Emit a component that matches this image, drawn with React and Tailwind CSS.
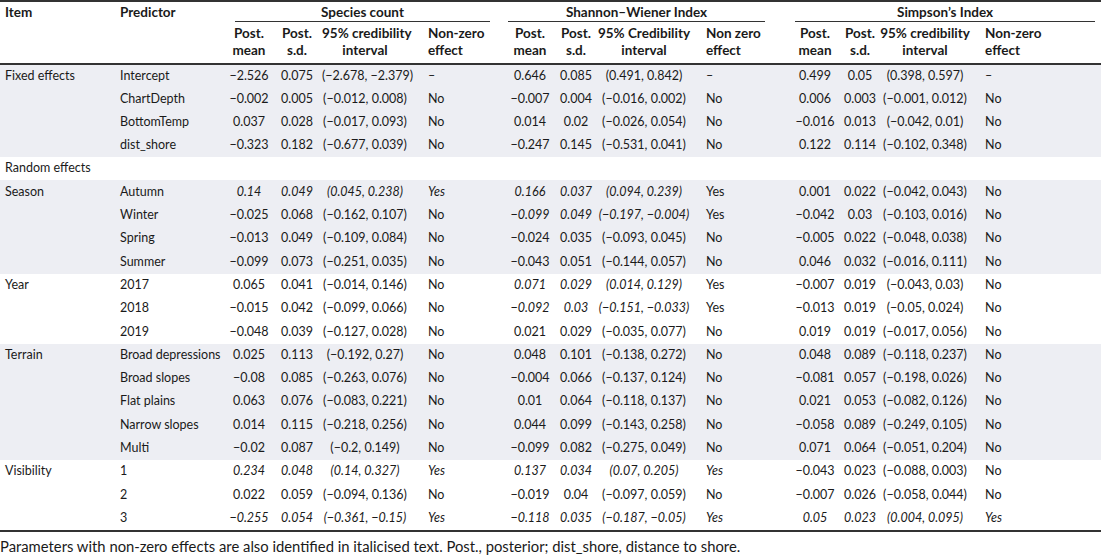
import React from 'react';

// columns: item, predictor, then 3 groups x (mean, sd, CI, non-zero)
const widths = [114, 112, 46, 50, 86, 92, 60, 32, 104, 90, 58, 32, 98, 127];

const valCls = [
  'text-center', 'text-center', 'text-center', 'text-left pl-[20px]',
  'text-center', 'text-center', 'text-center', 'text-left pl-[10px]',
  'text-center', 'text-center', 'text-center', 'text-left pl-[11px]',
];

// a leading "_" marks an italicised value
const groups = [
  {
    item: 'Fixed effects',
    shade: true,
    rows: [
      ['Intercept', '−2.526', '0.075', '(−2.678, −2.379)', '–', '0.646', '0.085', '(0.491, 0.842)', '–', '0.499', '0.05', '(0.398, 0.597)', '–'],
      ['ChartDepth', '−0.002', '0.005', '(−0.012, 0.008)', 'No', '−0.007', '0.004', '(−0.016, 0.002)', 'No', '0.006', '0.003', '(−0.001, 0.012)', 'No'],
      ['BottomTemp', '0.037', '0.028', '(−0.017, 0.093)', 'No', '0.014', '0.02', '(−0.026, 0.054)', 'No', '−0.016', '0.013', '(−0.042, 0.01)', 'No'],
      ['dist_shore', '−0.323', '0.182', '(−0.677, 0.039)', 'No', '−0.247', '0.145', '(−0.531, 0.041)', 'No', '0.122', '0.114', '(−0.102, 0.348)', 'No'],
    ],
  },
  { item: 'Random effects', shade: false, rows: [['']] },
  {
    item: 'Season',
    shade: true,
    rows: [
      ['Autumn', '_0.14', '_0.049', '_(0.045, 0.238)', '_Yes', '_0.166', '_0.037', '_(0.094, 0.239)', 'Yes', '0.001', '0.022', '(−0.042, 0.043)', 'No'],
      ['Winter', '−0.025', '0.068', '(−0.162, 0.107)', 'No', '_−0.099', '_0.049', '_(−0.197, −0.004)', 'Yes', '−0.042', '0.03', '(−0.103, 0.016)', 'No'],
      ['Spring', '−0.013', '0.049', '(−0.109, 0.084)', 'No', '−0.024', '0.035', '(−0.093, 0.045)', 'No', '−0.005', '0.022', '(−0.048, 0.038)', 'No'],
      ['Summer', '−0.099', '0.073', '(−0.251, 0.035)', 'No', '−0.043', '0.051', '(−0.144, 0.057)', 'No', '0.046', '0.032', '(−0.016, 0.111)', 'No'],
    ],
  },
  {
    item: 'Year',
    shade: false,
    rows: [
      ['2017', '0.065', '0.041', '(−0.014, 0.146)', 'No', '_0.071', '_0.029', '_(0.014, 0.129)', 'Yes', '−0.007', '0.019', '(−0.043, 0.03)', 'No'],
      ['2018', '−0.015', '0.042', '(−0.099, 0.066)', 'No', '_−0.092', '_0.03', '_(−0.151, −0.033)', 'Yes', '−0.013', '0.019', '(−0.05, 0.024)', 'No'],
      ['2019', '−0.048', '0.039', '(−0.127, 0.028)', 'No', '0.021', '0.029', '(−0.035, 0.077)', 'No', '0.019', '0.019', '(−0.017, 0.056)', 'No'],
    ],
  },
  {
    item: 'Terrain',
    shade: true,
    rows: [
      ['Broad depressions', '0.025', '0.113', '(−0.192, 0.27)', 'No', '0.048', '0.101', '(−0.138, 0.272)', 'No', '0.048', '0.089', '(−0.118, 0.237)', 'No'],
      ['Broad slopes', '−0.08', '0.085', '(−0.263, 0.076)', 'No', '−0.004', '0.066', '(−0.137, 0.124)', 'No', '−0.081', '0.057', '(−0.198, 0.026)', 'No'],
      ['Flat plains', '0.063', '0.076', '(−0.083, 0.221)', 'No', '0.01', '0.064', '(−0.118, 0.137)', 'No', '0.021', '0.053', '(−0.082, 0.126)', 'No'],
      ['Narrow slopes', '0.014', '0.115', '(−0.218, 0.256)', 'No', '0.044', '0.099', '(−0.143, 0.258)', 'No', '−0.058', '0.089', '(−0.249, 0.105)', 'No'],
      ['Multi', '−0.02', '0.087', '(−0.2, 0.149)', 'No', '−0.099', '0.082', '(−0.275, 0.049)', 'No', '0.071', '0.064', '(−0.051, 0.204)', 'No'],
    ],
  },
  {
    item: 'Visibility',
    shade: false,
    rows: [
      ['1', '_0.234', '_0.048', '_(0.14, 0.327)', '_Yes', '_0.137', '_0.034', '_(0.07, 0.205)', '_Yes', '−0.043', '0.023', '(−0.088, 0.003)', 'No'],
      ['2', '0.022', '0.059', '(−0.094, 0.136)', 'No', '−0.019', '0.04', '(−0.097, 0.059)', 'No', '−0.007', '0.026', '(−0.058, 0.044)', 'No'],
      ['3', '_−0.255', '_0.054', '_(−0.361, −0.15)', '_Yes', '_−0.118', '_0.035', '_(−0.187, −0.05)', '_Yes', '_0.05', '_0.023', '_(0.004, 0.095)', '_Yes'],
    ],
  },
];

function Val({ v, cls }) {
  const italic = v.startsWith('_');
  return (
    <td className={`px-0 whitespace-nowrap ${cls} ${italic ? 'italic' : ''}`}>
      {italic ? v.slice(1) : v}
    </td>
  );
}

function SubHead({ a, b, cls }) {
  return (
    <th className={`px-0 pt-[3px] pb-[4px] font-bold leading-[17px] whitespace-nowrap ${cls}`}>
      {a}
      <br />
      {b}
    </th>
  );
}

function GroupHead({ title, cls }) {
  return (
    <th colSpan={4} className="p-0 font-bold align-top">
      <div className={`border-b border-[#333] h-[20px] leading-[20px] text-center ${cls}`}>{title}</div>
    </th>
  );
}

export default function App() {
  const sub = [
    ['Post.', 'mean'], ['Post.', 's.d.'], ['95% credibility', 'interval'], ['Non-zero', 'effect'],
    ['Post.', 'mean'], ['Post.', 's.d.'], ['95% Credibility', 'interval'], ['Non zero', 'effect'],
    ['Post.', 'mean'], ['Post.', 's.d.'], ['95% credibility', 'interval'], ['Non-zero', 'effect'],
  ];

  return (
    <div className="w-[1101px] h-[556px] bg-white text-[#1a1a1a] font-['Lato',sans-serif] text-[12.5px]">
      <table className="table-fixed border-collapse w-[1101px] border-t-2 border-[#333]">
        <colgroup>
          {widths.map((w, i) => (
            <col key={i} style={{ width: w }} />
          ))}
        </colgroup>
        <thead className="text-[13.5px]">
          <tr className="h-[21px]">
            <th className="pl-[5px] text-left font-bold align-top leading-[20px]">Item</th>
            <th className="pl-[6px] text-left font-bold align-top leading-[20px]">Predictor</th>
            <GroupHead title="Species count" cls="ml-[9px] mr-[10px]" />
            <GroupHead title="Shannon–Wiener Index" cls="ml-[8px] mr-[21px]" />
            <GroupHead title="Simpson’s Index" cls="ml-[9px] mr-[6px]" />
          </tr>
          <tr className="border-b-2 border-[#333]">
            <th />
            <th />
            {sub.map(([a, b], i) => (
              <SubHead key={i} a={a} b={b} cls={valCls[i]} />
            ))}
          </tr>
        </thead>
        <tbody>
          {groups.map((g) =>
            g.rows.map((r, ri) => (
              <tr key={g.item + ri} className={`h-[23.3px] ${g.shade ? 'bg-[#edeef3]' : ''}`}>
                {r.length === 1 ? (
                  <td colSpan={14} className="pl-[5px]">{g.item}</td>
                ) : (
                  <>
                    <td className="pl-[5px] whitespace-nowrap">{ri === 0 ? g.item : ''}</td>
                    <td className="pl-[6px] whitespace-nowrap">{r[0]}</td>
                    {r.slice(1).map((v, i) => (
                      <Val key={i} v={v} cls={valCls[i]} />
                    ))}
                  </>
                )}
              </tr>
            ))
          )}
        </tbody>
      </table>
      <div className="border-t-2 border-[#333] pt-[5px] leading-[18px] text-[14.8px]">
        Parameters with non-zero effects are also identified in italicised text. Post., posterior; dist_shore, distance to shore.
      </div>
    </div>
  );
}
